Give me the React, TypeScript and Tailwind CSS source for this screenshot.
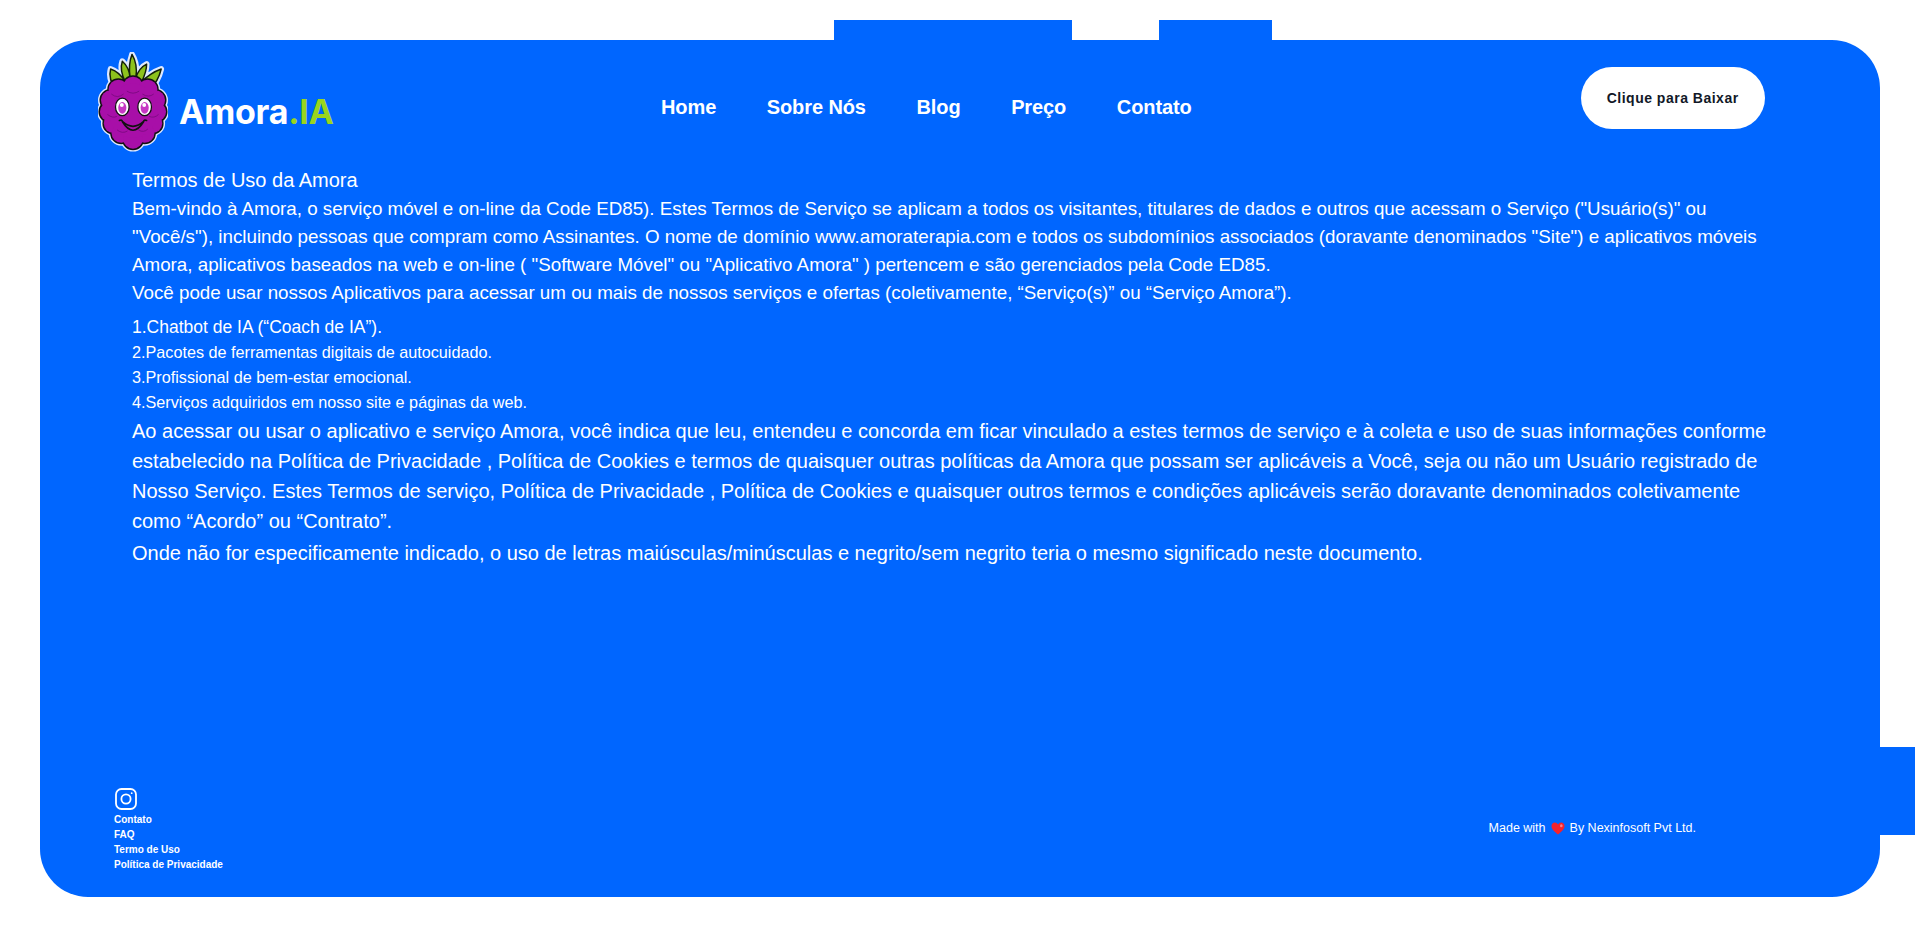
import React from "react";

const sans = "font-['Liberation_Sans',Arial,sans-serif]";

function Berry() {
  const bumps: [number, number, number][] = [
    [19, 36, 10], [34, 33, 10], [49, 36, 10],
    [11, 47, 10], [57, 47, 10],
    [10, 59, 10], [58, 59, 10],
    [14, 71, 10], [54, 71, 10],
    [22, 81, 10], [46, 81, 10],
    [34, 87, 10],
  ];
  const blades = "M17 36 Q8 26 11 15 Q20 18 26 28 Q20 16 23 7 Q30 13 31 24 Q29 10 33 0 Q39 10 37 24 Q40 14 48 10 Q48 18 43 28 Q52 19 63 15 Q60 28 51 36 Q34 28 17 36 Z";
  return (
    <svg viewBox="-2 -2 72 104" width={70} height={102} className="shrink-0 -ml-[1px]">
      <g fill="#dfe9ff" stroke="#dfe9ff" strokeWidth={6} strokeLinejoin="round">
        <path d={blades} />
        {bumps.map(([x, y, r], i) => <circle key={i} cx={x} cy={y} r={r} />)}
      </g>
      <path d={blades} fill="#8dc21c" stroke="#14210a" strokeWidth={1.5} strokeLinejoin="round" />
      <path d="M17 36 Q34 27 51 36 L44 31 Q34 26 24 31 Z" fill="#5f9410" />
      <g fill="#111" stroke="#111" strokeWidth={3}>
        {bumps.map(([x, y, r], i) => <circle key={i} cx={x} cy={y} r={r} />)}
      </g>
      <g fill="#a80fa8">
        {bumps.map(([x, y, r], i) => <circle key={i} cx={x} cy={y} r={r} />)}
        <ellipse cx={34} cy={58} rx={25} ry={28} />
      </g>
      <g stroke="#7a0a80" strokeWidth={0.9} fill="none" strokeLinecap="round">
        <path d="M12 41 q6 5 12 0 M28 38 q6 4 12 0 M44 41 q6 4 11 0 M8 62 q5 4 9 2 M51 64 q5 2 9 -2 M18 78 q5 4 10 1 M40 78 q5 3 9 -1" />
      </g>
      <g>
        <ellipse cx={23} cy={54} rx={7} ry={9} fill="#fff" stroke="#111" strokeWidth={1.3} />
        <ellipse cx={46} cy={54} rx={7} ry={9} fill="#fff" stroke="#111" strokeWidth={1.3} />
        <ellipse cx={23} cy={55} rx={4.2} ry={6} fill="#c637c4" />
        <ellipse cx={46} cy={55} rx={4.2} ry={6} fill="#c637c4" />
        <circle cx={22.5} cy={52} r={2} fill="#fff" />
        <circle cx={45.5} cy={52} r={2} fill="#fff" />
      </g>
      <path d="M20 68 q3 -1 3 1 q11 10 22 0 q0 -2 3 -1 M23 69 q11 18 22 0" fill="none" stroke="#111" strokeWidth={1.7} strokeLinecap="round" />
    </svg>
  );
}

function Insta() {
  return (
    <svg viewBox="0 0 22 22" width={22} height={22} fill="none" stroke="#fff" strokeWidth={1.8}>
      <rect x={1} y={1} width={20} height={20} rx={5.5} />
      <circle cx={11} cy={11} r={4.6} />
      <circle cx={16.7} cy={5.2} r={0.9} fill="#fff" stroke="none" />
    </svg>
  );
}

function Heart() {
  return (
    <svg viewBox="0 0 14 13" width={14} height={13} className="shrink-0">
      <path d="M7 12.5 C2.5 9 .5 6.7 .5 4 C.5 1.9 2.1 .6 3.8 .6 C5.1 .6 6.3 1.3 7 2.6 C7.7 1.3 8.9 .6 10.2 .6 C11.9 .6 13.5 1.9 13.5 4 C13.5 6.7 11.5 9 7 12.5 Z" fill="#f5222d" />
      <ellipse cx={10.3} cy={3.7} rx={1.3} ry={1.5} fill="#ff7d86" />
    </svg>
  );
}

export default function App() {
  return (
    <div className={`bg-white h-[952px] pt-5 overflow-hidden ${sans}`}>
      <div className="flex h-5">
        <div className="ml-[834px] w-[238px] bg-[#0066ff]" />
        <div className="ml-[87px] w-[113px] bg-[#0066ff]" />
      </div>
      <main className="relative mx-10 h-[857px] rounded-[48px] bg-[#0066ff] text-white flex flex-col">
        <div className="absolute right-[-35px] top-[707px] h-[88px] w-[35px] bg-[#0066ff]" />
        <header className="flex items-start h-[126px] shrink-0 pl-[59px]">
          <div className="flex items-end w-[562px] pt-[12px]">
            <Berry />
            <span className="ml-[11px] mb-[20px] font-['Inter',sans-serif] font-bold text-[34px] leading-[44px] tracking-[-0.25px]">
              Amora<span className="text-[#9ad51e]">.IA</span>
            </span>
          </div>
          <nav className="flex gap-[50.6px] pt-[55px] text-[20px] leading-6 font-bold tracking-[-0.1px]">
            <a>Home</a>
            <a>Sobre Nós</a>
            <a>Blog</a>
            <a>Preço</a>
            <a>Contato</a>
          </nav>
          <button className="ml-[389px] mt-[27px] h-[62px] w-[184px] rounded-full bg-white text-[#111827] text-[14px] font-bold tracking-[0.5px]">
            Clique para Baixar
          </button>
        </header>
        <section className="px-[92px] pr-[100px]">
          <h1 className="text-[20px] leading-[29px] font-normal">Termos de Uso da Amora</h1>
          <p className="text-[18.77px] leading-[28px]">
            Bem-vindo à Amora, o serviço móvel e on-line da Code ED85). Estes Termos de Serviço se aplicam a todos os visitantes, titulares de dados e outros que acessam o Serviço ("Usuário(s)" ou "Você/s"), incluindo pessoas que compram como Assinantes. O nome de domínio www.amoraterapia.com e todos os subdomínios associados (doravante denominados "Site") e aplicativos móveis Amora, aplicativos baseados na web e on-line ( "Software Móvel" ou "Aplicativo Amora" ) pertencem e são gerenciados pela Code ED85.
            <br />
            Você pode usar nossos Aplicativos para acessar um ou mais de nossos serviços e ofertas (coletivamente, “Serviço(s)” ou “Serviço Amora”).
          </p>
          <ol className="mt-[8px]">
            <li className="text-[17.5px] leading-[25px]">1.Chatbot de IA (“Coach de IA”).</li>
            <li className="text-[16.2px] leading-[25px]">2.Pacotes de ferramentas digitais de autocuidado.</li>
            <li className="text-[16.2px] leading-[25px]">3.Profissional de bem-estar emocional.</li>
            <li className="text-[16.2px] leading-[25px]">4.Serviços adquiridos em nosso site e páginas da web.</li>
          </ol>
          <p className="text-[20px] leading-[30px] mt-[1px]">
            Ao acessar ou usar o aplicativo e serviço Amora, você indica que leu, entendeu e concorda em ficar vinculado a estes termos de serviço e à coleta e uso de suas informações conforme estabelecido na Política de Privacidade , Política de Cookies e termos de quaisquer outras políticas da Amora que possam ser aplicáveis a Você, seja ou não um Usuário registrado de Nosso Serviço. Estes Termos de serviço, Política de Privacidade , Política de Cookies e quaisquer outros termos e condições aplicáveis serão doravante denominados coletivamente como “Acordo” ou “Contrato”.
          </p>
          <p className="text-[20px] leading-[30px] mt-[2px]">
            Onde não for especificamente indicado, o uso de letras maiúsculas/minúsculas e negrito/sem negrito teria o mesmo significado neste documento.
          </p>
        </section>
        <footer className="mt-auto flex items-start justify-between pl-[74px] pr-[184px] pb-[25px]">
          <div>
            <div className="ml-[1px] mb-[2px]"><Insta /></div>
            <ul className="text-[10px] leading-[15px] font-bold">
              <li>Contato</li>
              <li>FAQ</li>
              <li>Termo de Uso</li>
              <li>Política de Privacidade</li>
            </ul>
          </div>
          <div className="flex items-center gap-[5px] text-[12.5px] leading-[16px] mt-[32px]">
            <span>Made with</span>
            <Heart />
            <span>By Nexinfosoft Pvt Ltd.</span>
          </div>
        </footer>
      </main>
    </div>
  );
}
